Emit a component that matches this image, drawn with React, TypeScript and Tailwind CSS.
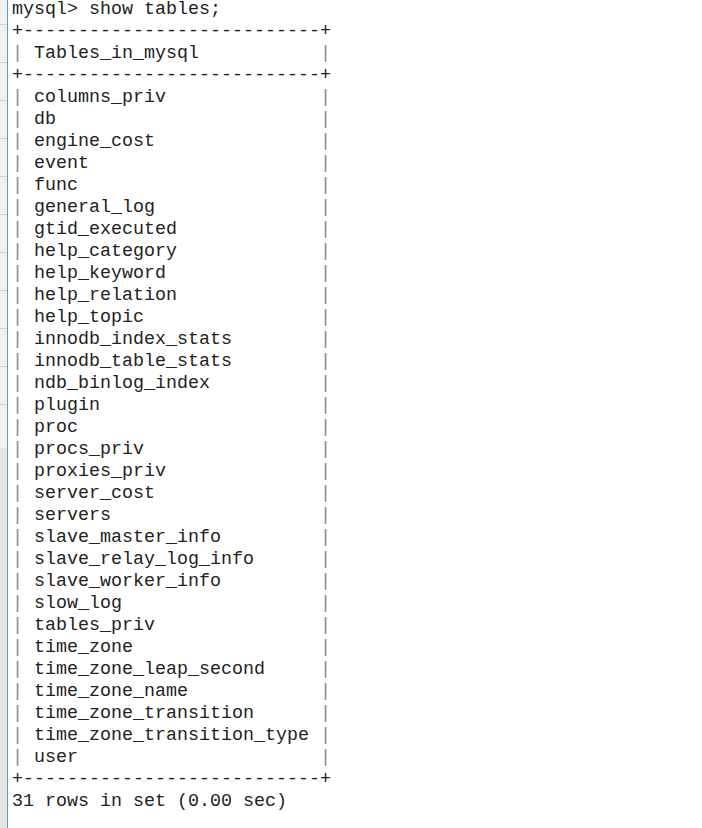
const tables = [
  "columns_priv",
  "db",
  "engine_cost",
  "event",
  "func",
  "general_log",
  "gtid_executed",
  "help_category",
  "help_keyword",
  "help_relation",
  "help_topic",
  "innodb_index_stats",
  "innodb_table_stats",
  "ndb_binlog_index",
  "plugin",
  "proc",
  "procs_priv",
  "proxies_priv",
  "server_cost",
  "servers",
  "slave_master_info",
  "slave_relay_log_info",
  "slave_worker_info",
  "slow_log",
  "tables_priv",
  "time_zone",
  "time_zone_leap_second",
  "time_zone_name",
  "time_zone_transition",
  "time_zone_transition_type",
  "user",
];

const width = 25;
const border = "+" + "-".repeat(width + 2) + "+";

function Row({ text }: { text: string }) {
  return (
    <div className="h-[22px] leading-[22px] whitespace-pre">
      <span className="text-[#8a8a8a]">|</span>
      {" " + text.padEnd(width) + " "}
      <span className="text-[#8a8a8a]">|</span>
    </div>
  );
}

function Line({ text }: { text: string }) {
  return <div className="h-[22px] leading-[22px] whitespace-pre">{text}</div>;
}

function Gutter() {
  return (
    <div className="flex w-[8px] shrink-0 flex-col border-r border-[#5b9bd5]">
      <div className="flex h-[448px] flex-col bg-[#f1f1f1] pt-[24px]">
        {Array.from({ length: 11 }).map((_, i) => (
          <div key={i} className="h-[38px] border-t border-[#d2d2d2]" />
        ))}
      </div>
      <div className="flex-1 bg-[#e4e4e4]" />
    </div>
  );
}

export default function App() {
  return (
    <div className="flex h-[828px] w-[702px] overflow-hidden bg-white">
      <Gutter />
      <div
        className="-mt-px pl-[4px] text-[18.33px] text-[#222222]"
        style={{ fontFamily: '"Liberation Mono", monospace' }}
      >
        <Line text="mysql> show tables;" />
        <Line text={border} />
        <Row text="Tables_in_mysql" />
        <Line text={border} />
        {tables.map((t) => (
          <Row key={t} text={t} />
        ))}
        <Line text={border} />
        <Line text="31 rows in set (0.00 sec)" />
      </div>
    </div>
  );
}
